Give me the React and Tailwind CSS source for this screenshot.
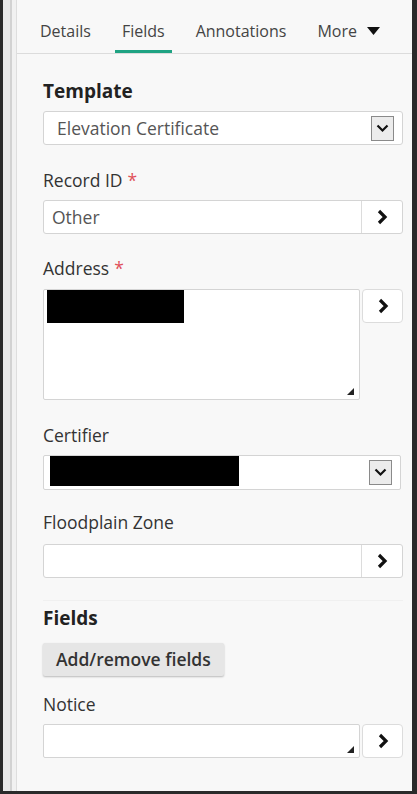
import React from "react";

const font = { fontFamily: '"Open Sans", "Noto Sans", sans-serif' };

// Chevron right used on the side buttons
function ChevronRight() {
  return (
    <svg width="12" height="16" viewBox="0 0 12 16">
      <path d="M3 2 L9 8 L3 14" fill="none" stroke="#111" strokeWidth="3.2" strokeLinejoin="miter" />
    </svg>
  );
}

function SelectArrow() {
  return (
    <div className="flex items-center justify-center w-[23px] h-[25px] border border-[#8a8a8a] bg-[#ececec]">
      <svg width="13" height="9" viewBox="0 0 13 9">
        <path d="M1.5 1.5 L6.5 6.5 L11.5 1.5" fill="none" stroke="#111" strokeWidth="2.2" />
      </svg>
    </div>
  );
}

function Resize() {
  return (
    <svg width="7" height="7" viewBox="0 0 7 7" className="absolute right-[5px] bottom-[4px]">
      <path d="M7 0 L7 7 L0 7 Z" fill="#222" />
    </svg>
  );
}

function Label({ children, required }) {
  return (
    <div className="text-[17.5px] leading-[24px] text-[#333]">
      {children}
      {required && <span className="text-[#e0505a] ml-[5px]">*</span>}
    </div>
  );
}

function SideButton({ className = "" }) {
  return (
    <button className={`flex items-center justify-center w-[41px] h-[34px] bg-white border border-[#dcdcdc] rounded-[4px] ${className}`}>
      <ChevronRight />
    </button>
  );
}

function LinkedInput({ value }) {
  return (
    <div className="flex h-[34px] bg-white border border-[#d4d4d4] rounded-[3px]">
      <div className="flex-1 flex items-center pl-[8px] text-[17.5px] text-[#555]">{value}</div>
      <div className="w-[41px] flex items-center justify-center border-l border-[#dcdcdc]">
        <ChevronRight />
      </div>
    </div>
  );
}

const tabs = ["Details", "Fields", "Annotations"];

export default function App() {
  return (
    <div style={font} className="w-[417px] h-[794px] bg-[#2a2a2a] pl-[3px] pr-[5px] pb-[3px] flex">
      <div className="w-[7px] bg-[#e9e9e9]" />
      <div className="w-[2px] bg-[#d2d2d2]" />
      <div className="w-[4px] bg-[#f1f1f1]" />
      <div className="w-[1px] bg-[#dedede]" />
      <div className="flex-1 bg-[#f8f8f8] flex flex-col">
        {/* tab bar */}
        <div className="h-[54px] border-b border-[#dcdcdc] flex items-end pl-[16px] gap-[17px]">
          {tabs.map((t) => (
            <div
              key={t}
              className={`px-[7px] h-[50px] pt-[9px] flex items-center text-[16px] text-[#444] border-b-[3px] ${
                t === "Fields" ? "border-[#1fa383]" : "border-transparent"
              }`}
            >
              {t}
            </div>
          ))}
          <div className="px-[7px] h-[50px] pt-[9px] flex items-center text-[16px] text-[#444] border-b-[3px] border-transparent gap-[10px]">
            More
            <svg width="13" height="8" viewBox="0 0 13 8">
              <path d="M0 0 L13 0 L6.5 8 Z" fill="#111" />
            </svg>
          </div>
        </div>

        <div className="pl-[26px] pr-[9px] flex flex-col">
          <div className="mt-[25px] text-[19px] leading-[24px] font-bold text-[#222]">Template</div>
          <div className="mt-[8px] h-[34px] bg-white border border-[#d4d4d4] rounded-[3px] flex items-center justify-between pl-[13px] pr-[8px]">
            <span className="text-[17.5px] text-[#555]">Elevation Certificate</span>
            <SelectArrow />
          </div>

          <div className="mt-[23px]">
            <Label required>Record ID</Label>
          </div>
          <div className="mt-[8px]">
            <LinkedInput value="Other" />
          </div>

          <div className="mt-[22px]">
            <Label required>Address</Label>
          </div>
          <div className="mt-[9px] flex gap-[2px] items-start">
            <div className="relative flex-1 h-[111px] bg-white border border-[#d4d4d4] rounded-[2px]">
              <div className="ml-[3px] w-[137px] h-[33px] bg-black" />
              <Resize />
            </div>
            <SideButton />
          </div>

          <div className="mt-[23px]">
            <Label>Certifier</Label>
          </div>
          <div className="mt-[8px] mr-[2px] h-[35px] bg-white border border-[#d4d4d4] rounded-[2px] flex justify-between pl-[6px] pr-[8px]">
            <div className="w-[189px] h-[30px] bg-black" />
            <div className="self-center">
              <SelectArrow />
            </div>
          </div>

          <div className="mt-[20px]">
            <Label>Floodplain Zone</Label>
          </div>
          <div className="mt-[10px]">
            <LinkedInput value="" />
          </div>

          <div className="mt-[22px] border-t border-[#f0f0f0]" />
          <div className="mt-[5px] text-[19px] leading-[24px] font-bold text-[#222]">Fields</div>
          <div className="mt-[13px]">
            <button className="h-[33px] px-[13px] bg-[#e6e6e6] rounded-[2px] text-[17.5px] font-semibold text-[#333] shadow-[0_1px_2px_rgba(0,0,0,0.25)]">
              Add/remove fields
            </button>
          </div>

          <div className="mt-[16px]">
            <Label>Notice</Label>
          </div>
          <div className="mt-[8px] flex gap-[2px] items-start">
            <div className="relative flex-1 h-[34px] bg-white border border-[#d4d4d4] rounded-[2px]">
              <Resize />
            </div>
            <SideButton />
          </div>
        </div>
      </div>
    </div>
  );
}
